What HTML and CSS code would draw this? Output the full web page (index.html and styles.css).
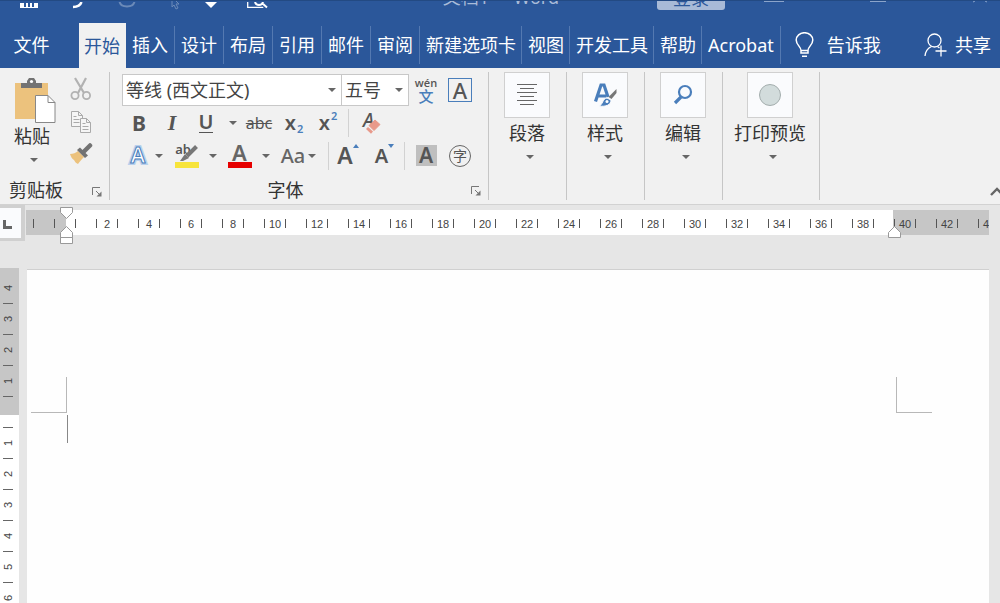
FILE: index.html
```html
<!DOCTYPE html>
<html lang="zh-CN">
<head>
<meta charset="utf-8">
<meta name="viewport" content="width=device-width, initial-scale=1">
<title>文档1 - Word</title>
<link rel="stylesheet" href="styles.css">
</head>
<body>
<svg class="defs" width="0" height="0" aria-hidden="true">
  <symbol id="caret" viewBox="0 0 8 4"><path d="M0 0h8L4 4z" fill="currentColor"/></symbol>
  <symbol id="launcher" viewBox="0 0 10 10"><path d="M.5 8V.5H8M4 4l4 4" fill="none" stroke="#777"/><path d="M9.500 4.500v5h-5z" fill="#777"/></symbol>
</svg>

<header class="titlebar">
  <div class="quick">
    <button class="q" aria-label="保存"><svg width="18" height="6" viewBox="0 0 18 6"><path d="M0 0h18v5H0z" fill="#fff"/><path d="M4 0h10v4H4z" fill="#2b579a"/><path d="M6 0h2v4H6zM10 0h2v4h-2z" fill="#fff"/></svg></button>
    <button class="q" aria-label="撤消"><svg width="12" height="7" viewBox="0 0 12 7"><path d="M9.500 0C8.500 3 5.500 4.800 1 5" fill="none" stroke="#fff" stroke-width="2.500"/></svg></button>
    <button class="q dim" aria-label="恢复"><svg width="18" height="7" viewBox="0 0 18 7"><path d="M1.500 0c2 6 13 6 15 0" fill="none" stroke="#fff" stroke-width="2"/></svg></button>
    <button class="q dim" aria-label="选择"><svg width="10" height="9" viewBox="0 0 10 9"><path d="M1 0v6l2-2 2 4 2-1-2-4h3L5 0" fill="none" stroke="#fff"/></svg></button>
    <button class="q q-more" aria-label="触摸模式"><svg width="14" height="7" viewBox="0 0 14 7"><path d="M1 0h12L7 6z" fill="#fff"/></svg></button>
    <button class="q q-preview" aria-label="打印预览"><svg width="22" height="8" viewBox="0 0 22 8"><path d="M.7 0v5.300h15.600" fill="none" stroke="#fff" stroke-width="1.300"/><path d="M8 0c1 4 7 4 8 0M15 1l5 4.500" fill="none" stroke="#fff" stroke-width="2"/></svg></button>
  </div>
  <span class="doc-title">文档1  -  Word</span>
  <button class="login">登录</button>
  <div class="window">
    <button class="w" aria-label="功能区选项"><svg width="20" height="3"><path d="M0 .5h20" stroke="#8ba4cb"/></svg></button>
    <button class="w" aria-label="还原"><svg width="16" height="3"><path d="M0 .5h16" stroke="#8ba4cb"/></svg></button>
    <button class="w" aria-label="关闭"><svg width="16" height="3"><path d="M1 1l2-1M13 0l2 1" stroke="#8ba4cb"/></svg></button>
  </div>
</header>

<nav class="tabs">
  <button class="file">文件</button>
  <button class="tab active">开始</button>
  <button class="tab">插入</button>
  <button class="tab">设计</button>
  <button class="tab">布局</button>
  <button class="tab">引用</button>
  <button class="tab">邮件</button>
  <button class="tab">审阅</button>
  <button class="tab snug">新建选项卡</button>
  <button class="tab snug">视图</button>
  <button class="tab snug">开发工具</button>
  <button class="tab snug">帮助</button>
  <button class="tab">Acrobat</button>
  <button class="aux tell"><svg width="19" height="26" viewBox="0 0 19 26" fill="none" stroke="#fff" stroke-width="1.500"><path d="M6 18.500c0-4-4.800-5.500-4.800-10.500a8.300 7.300 0 0 1 16.600 0c0 5-4.800 6.500-4.800 10.500zM6 18.500v2.500h7v-2.500M7 24.300h5"/></svg>告诉我</button>
  <button class="aux share"><svg width="23" height="24" viewBox="0 0 23 24" fill="none" stroke="#fff" stroke-width="1.300"><circle cx="10.500" cy="7.500" r="6.500"/><path d="M1 23c.5-5 3-8 6.500-9.500M13.500 13.500l2 1.500M17 12.500v11M11.500 18h11"/></svg>共享</button>
</nav>

<section class="ribbon">
  <div class="group clipboard">
    <div class="clip-tools">
      <button class="paste">
        <svg width="42" height="47" viewBox="0 0 42 47"><path d="M1 6h33v36H1z" fill="#ecc27d"/><path d="M7 11V6h6V4l2-3h5l2 3v2h6v5z" fill="#737373"/><circle cx="17.500" cy="4.500" r="1.600" fill="#fff"/><path d="M21.500 18.500H34l7 7v20H21.500z" fill="#fff" stroke="#888"/><path d="M34 18.500v7h7" fill="none" stroke="#888"/></svg>
        <span>粘贴</span>
        <svg class="caret"><use href="#caret"/></svg>
      </button>
      <div class="clip-side">
        <button aria-label="剪切"><svg width="22" height="24" viewBox="0 0 22 24" fill="none" stroke="#b2b2b2"><path d="M5 1l9 15M16 1L8 16" stroke-width="2.200"/><circle cx="5" cy="18.500" r="3.600" stroke-width="1.800"/><circle cx="16.500" cy="18.500" r="3.600" stroke-width="1.800"/></svg></button>
        <button aria-label="复制"><svg width="22" height="24" viewBox="0 0 22 24" fill="#f5f5f5" stroke="#aaa"><path d="M1.500 1.500h7l4 4v11h-11zM8.500 1.500v4h4"/><path d="M3.500 6.500h3M3.500 9.500h6M3.500 12.500h6"/><path d="M10.500 8.500h6l4 4v10h-10zM16.500 8.500v4h4M12.500 13.500h3M12.500 16.500h6M12.500 19.500h6"/></svg></button>
        <button aria-label="格式刷"><svg width="24" height="24" viewBox="0 0 24 24"><path d="M1 11c3 0 6-1 8-3l6 6c-2 2-4 4-6 7-2-1-3-2-4-4-2-1-3-3-4-6z" fill="#ecc27d"/><path d="M8 7l3-2.500 8 8-3 2.500z" fill="#737373"/><path d="M15 8.500l6-6" stroke="#737373" stroke-width="4.500" stroke-linecap="round"/></svg></button>
      </div>
    </div>
    <div class="group-label"><span>剪贴板</span><button class="launch" aria-label="剪贴板选项"><svg width="10" height="10"><use href="#launcher"/></svg></button></div>
  </div>

  <div class="group font">
    <div class="row row-select">
      <label class="combo combo-name"><select aria-label="字体"><option>等线 (西文正文)</option></select><svg class="caret"><use href="#caret"/></svg></label>
      <label class="combo combo-size"><select aria-label="字号"><option>五号</option></select><svg class="caret"><use href="#caret"/></svg></label>
      <button class="pinyin"><span>wén</span><b>文</b></button>
      <button class="boxed">A</button>
    </div>
    <div class="row row-style">
      <button class="bold">B</button>
      <button class="italic">I</button>
      <button class="underline">U</button>
      <button aria-label="下划线样式"><svg class="caret"><use href="#caret"/></svg></button>
      <button class="strike">abc</button>
      <button class="script">x<sub>2</sub></button>
      <button class="script">x<sup>2</sup></button>
      <i class="sep"></i>
      <button class="clear"><span>A</span><svg width="16" height="16" viewBox="0 0 16 16"><path d="M10 1l5 4.500-6 6-5-5z" fill="#e8998a" stroke="#e8998a" stroke-linejoin="round"/><path d="M3 8l5 4.500-2 2.300L1 10z" fill="#e8998a"/></svg></button>
    </div>
    <div class="row row-color">
      <button aria-label="文本效果"><svg class="fx" width="20" height="22" viewBox="0 0 20 22"><text class="fx-glow" x="10" y="18" text-anchor="middle" aria-hidden="true">A</text><text class="fx-line" x="10" y="18" text-anchor="middle">A</text></svg></button>
      <button aria-label="文本效果选项"><svg class="caret"><use href="#caret"/></svg></button>
      <button class="mark"><span>ab</span><svg width="18" height="17" viewBox="0 0 18 17"><path d="M16.500 1.500L7 11" stroke="#777" stroke-width="4"/><path d="M5 9l4 4-6 3H0z" fill="#777"/></svg></button>
      <button aria-label="突出显示颜色"><svg class="caret"><use href="#caret"/></svg></button>
      <button class="ink">A</button>
      <button aria-label="字体颜色"><svg class="caret"><use href="#caret"/></svg></button>
      <button class="case">Aa<svg class="caret"><use href="#caret"/></svg></button>
      <i class="sep"></i>
      <button class="grow">A<svg width="6" height="4" viewBox="0 0 6 4"><path d="M0 4h6L3 0z" fill="#4a7ebb"/></svg></button>
      <button class="grow shrink">A<svg width="6" height="4" viewBox="0 0 6 4"><path d="M0 0h6L3 4z" fill="#4a7ebb"/></svg></button>
      <i class="sep"></i>
      <button class="shade"><span>A</span></button>
      <button class="circled"><span>字</span></button>
    </div>
    <div class="group-label centered"><span>字体</span><button class="launch" aria-label="字体选项"><svg width="10" height="10"><use href="#launcher"/></svg></button></div>
  </div>

  <button class="group big">
    <span class="tile"><svg width="20" height="22" viewBox="0 0 20 22" stroke="#666"><path d="M0 .5h20M3 4.500h14M0 8.500h20M3 12.500h14M0 16.500h20M3 20.500h14"/></svg></span>
    <span>段落</span><svg class="caret"><use href="#caret"/></svg>
  </button>
  <button class="group big">
    <span class="tile"><svg width="24" height="24" viewBox="0 0 24 24"><path d="M2.500 18.500L8 2h3l4 12M5 13h8" fill="none" stroke="#4a7ebb" stroke-width="3.200"/><path d="M23.500 6v4l-5 6-3-2z" fill="#777"/><path d="M14 15l4 2c0 5-5 7-12 6 4-1 3-7 8-8z" fill="#4a7ebb" stroke="#fafbfd"/><circle cx="14" cy="18.500" r="1.500" fill="#fff"/></svg></span>
    <span>样式</span><svg class="caret"><use href="#caret"/></svg>
  </button>
  <button class="group big">
    <span class="tile"><svg width="20" height="22" viewBox="0 0 20 22" fill="none" stroke="#4a7ebb"><circle cx="12" cy="8" r="6" stroke-width="2.200"/><path d="M8 13l-6 6" stroke-width="3.200"/></svg></span>
    <span>编辑</span><svg class="caret"><use href="#caret"/></svg>
  </button>
  <button class="group big big-wide">
    <span class="tile"><svg width="24" height="24" viewBox="0 0 24 24"><circle cx="12" cy="12" r="10.500" fill="#d2dcdc" stroke="#a3adad"/></svg></span>
    <span>打印预览</span><svg class="caret"><use href="#caret"/></svg>
  </button>
  <button class="collapse" aria-label="折叠功能区"><svg width="14" height="9" viewBox="0 0 14 9"><path d="M1 8l6-6 6 6" fill="none" stroke="#666" stroke-width="2.400"/></svg></button>
</section>

<div class="ruler-row">
  <button class="tabstop" aria-label="制表符"><svg width="9" height="9" viewBox="0 0 9 9"><path d="M1.500 0v7.500H9" fill="none" stroke="#666" stroke-width="3"/></svg></button>
  <div class="hruler">
    <div class="scale">
      <div class="ticks"><span>2</span><span></span><span>2</span><span>4</span><span>6</span><span>8</span><span>10</span><span>12</span><span>14</span><span>16</span><span>18</span><span>20</span><span>22</span><span>24</span><span>26</span><span>28</span><span>30</span><span>32</span><span>34</span><span>36</span><span>38</span><span>40</span><span>42</span><span>44</span></div>
    </div>
    <svg class="indent indent-left" width="14" height="38" viewBox="0 0 14 38" fill="#fff" stroke="#999"><path d="M.5.500h12v5l-6 6-6-6zM.5 30.500v-5l6-6 6 6v5zM.5 30.500h12v6H.5z"/></svg>
    <svg class="indent indent-right" width="14" height="13" viewBox="0 0 14 13" fill="#fff" stroke="#999"><path d="M.5 11.500v-5l6-6 6 6v5z"/></svg>
  </div>
</div>

<main class="work">
  <div class="vruler"><span>4</span><span>3</span><span>2</span><span>1</span><span></span><span>1</span><span>2</span><span>3</span><span>4</span><span>5</span><span>6</span></div>
  <div class="page">
    <div><div class="corner corner-left"></div><div class="cursor"></div></div>
    <div class="corner corner-right"></div>
  </div>
</main>
</body>
</html>
```

FILE: styles.css
```css
* { box-sizing: border-box; }

body {
  margin: 0;
  height: 100vh;
  display: flex;
  flex-direction: column;
  overflow: hidden;
  background: #e6e6e6;
  color: #333;
  font: 18px/24px "Noto Sans", "Noto Sans CJK SC", sans-serif;
}

button {
  display: flex;
  align-items: center;
  justify-content: center;
  padding: 0;
  border: 0;
  background: none;
  color: inherit;
  font: inherit;
  white-space: nowrap;
}

svg { display: block; flex: none; }
.defs { position: absolute; }
.caret { width: 8px; height: 4px; color: #666; }

/* Title bar */
.titlebar {
  display: flex;
  align-items: flex-start;
  flex: none;
  height: 23px;
  overflow: hidden;
  background: #2b579a;
  border-top: 1px solid #234a83;
}
.quick { display: flex; flex: 1; padding-left: 4px; }
.q { width: 49px; }
.q-more { width: 22px; }
.q-preview { width: 72px; }
.dim { opacity: .3; }
.doc-title { margin-top: -16px; color: #a9bbd8; white-space: pre; }
.login {
  width: 68px;
  height: 24px;
  margin: -15px 0 0 98px;
  border-radius: 3px;
  background: #a8bad7;
  color: #2b579a;
}
.window { display: flex; justify-content: space-between; width: 275px; padding: 0 12px 0 39px; }

/* Tabs */
.tabs { display: flex; align-items: stretch; flex: none; height: 45px; background: #2b579a; color: #fff; }
.tabs button { padding-bottom: 2px; }
.file { width: 79px; padding-right: 16px; }
.tab {
  padding: 0 7px 0 6px;
  background: linear-gradient(#5479b1, #5479b1) right 3px / 1px 38px no-repeat;
}
.tab.snug { padding-right: 6px; }
.tab.active { padding: 0 6px 0 5px; background: #f1f1f1; color: #2b579a; }
.aux { gap: 13px; }
.tell { margin-left: 14px; }
.share { gap: 8px; margin-left: auto; padding-right: 9px; }

/* Ribbon */
.ribbon {
  display: flex;
  flex: none;
  height: 137px;
  padding: 4px 0;
  background: #f1f1f1;
  border-bottom: 1px solid #d2d2d2;
  overflow: hidden;
}
.group { display: flex; flex-direction: column; border-right: 1px solid #c6c6c6; }
.clipboard { width: 110px; padding: 5px 7px 0 9px; }
.clip-tools { display: flex; flex: 1; gap: 10px; }
.paste { flex-direction: column; justify-content: flex-start; width: 50px; }
.paste svg:first-child { margin-left: 2px; }
.paste span { margin: 0 4px 10px 0; }
.clip-side { display: flex; flex-direction: column; gap: 9px; width: 24px; }
.group-label { display: flex; align-items: center; justify-content: space-between; height: 24px; margin-bottom: -2px; }
.launch { margin-top: 4px; }

.font { width: 379px; padding: 2px 7px 0 12px; }
.row { display: grid; align-items: center; height: 33px; color: #555; justify-content: start; }
.row > * { justify-self: center; }
.row-select { height: 32px; grid-template-columns: 220px 67px 34px 34px; }
.combo { position: relative; width: 100%; height: 32px; border: 1px solid #c8c8c8; background: #fff; }
.combo-size { border-left: 0; }
.combo select {
  width: 100%;
  height: 100%;
  padding: 0 3px;
  border: 0;
  appearance: none;
  background: none;
  color: #444;
  font: inherit;
}
.combo .caret { position: absolute; right: 5px; top: 13px; }
.pinyin { flex-direction: column; font: 600 11px/11px "Open Sans", "Noto Sans", sans-serif; }
.pinyin b { color: #4a7ebb; font: 500 15px/16px "Noto Sans CJK SC", sans-serif; }
.boxed { width: 24px; height: 24px; border: 1px solid #4a7ebb; font-size: 22px; font-weight: 500; }

.row-style { grid-template-columns: 34px 32px 36px 18px 34px 36px 32px 8px 40px; }
.bold { font-size: 21px; font-weight: 700; }
.italic { font: italic 700 22px "Liberation Serif", serif; }
.underline { font-weight: 600; font-size: 20px; line-height: 20px; border-bottom: 1px solid #555; }
.strike { font-size: 16px; text-decoration: line-through; }
.script { font-weight: 600; font-size: 20px; }
.script sub, .script sup { color: #4a7ebb; font-size: 11px; line-height: 12px; vertical-align: baseline; margin-left: 1px; }
.script sub { margin-top: 13px; }
.script sup { margin-top: -13px; }
.sep { width: 1px; height: 28px; background: #d2d2d2; }
.clear { align-items: flex-start; font: italic 500 19px/19px "Noto Sans", sans-serif; }
.clear svg { margin: 8px 0 0 -9px; }

.row-color { grid-template-columns: 32px 10px 45px 8px 45px 8px 57px 2px 38px 35px 5px 38px 30px; }
.fx { overflow: visible; }
.fx-glow, .fx-line { font: 600 22px "Noto Sans", sans-serif; }
.fx-glow { fill: none; stroke: #b9d0ec; stroke-width: 4; }
.fx-line { fill: #fff; stroke: #4a7ebb; stroke-width: 1; }
.mark { align-items: flex-start; width: 24px; height: 25px; border-bottom: 6px solid #f7e43b; font: 600 13px/13px "Noto Sans", sans-serif; }
.mark svg { margin: 2px 0 0 -11px; }
.ink { width: 24px; height: 25px; border-bottom: 6px solid #e60000; font: 600 22px/19px "Noto Sans", sans-serif; color: #666; }
.case { gap: 3px; font-size: 20px; font-weight: 500; color: #666; }
.grow { align-items: flex-start; font: 600 23px/23px "Noto Sans", sans-serif; }
.shrink { font-size: 20px; }
.shade span { display: block; width: 21px; background: #bfbfbf; font: 600 21px/21px "Noto Sans", sans-serif; }
.circled span { width: 22px; border: 1px solid #666; border-radius: 50%; font-size: 14px; line-height: 20px; }
.centered { position: relative; justify-content: center; margin: auto 0 -2px; }
.centered span { padding-right: 32px; }
.centered .launch { position: absolute; right: 0; top: 4px; }

.big { justify-content: flex-start; padding: 0 16px 0 15px; }
.big-wide { padding: 0 13px 0 11px; }
.tile {
  display: flex;
  align-items: center;
  justify-content: center;
  width: 46px;
  height: 46px;
  margin-bottom: 3px;
  border: 1px solid #d0d0d0;
  background: #fafbfd;
}
.big .caret { margin: 10px 0 0 6px; }
.collapse { align-self: flex-end; margin: 0 -4px 4px auto; }

/* Horizontal ruler */
.ruler-row { display: flex; align-items: flex-start; flex: none; height: 63px; }
.tabstop {
  flex: none;
  width: 25px;
  height: 36px;
  padding: 3px 6px 0 0;
  border: solid #d0d0d0;
  border-width: 3px 4px 3px 0;
  background: #fafbfd;
}
.hruler { position: relative; flex: 1; min-width: 0; margin: 5px 11px 0 1px; }
.scale {
  height: 25px;
  overflow: hidden;
  background: linear-gradient(to right, #c6c6c6 40px, #fff 40px, #fff 867px, #c6c6c6 867px);
}
.ticks { display: flex; align-items: center; height: 26px; margin-left: -24px; }
.ticks span {
  flex: none;
  width: 22px;
  height: 9px;
  margin: 0 10px;
  border: solid #555;
  border-width: 0 1px;
  color: #444;
  font: 11px/10px "Liberation Sans", sans-serif;
  text-align: center;
}
.indent { position: absolute; }
.indent-left { left: 34px; top: -3px; }
.indent-right { left: 862px; top: 16px; }

/* Document */
.work { display: flex; flex: 1; min-height: 0; overflow: hidden; padding-right: 11px; }
.vruler {
  flex: none;
  width: 19px;
  padding-top: 5px;
  background: linear-gradient(#c6c6c6 147px, #fff 147px);
}
.vruler span {
  display: block;
  width: 10px;
  height: 31px;
  margin-left: 3px;
  border-top: 1px solid #666;
  color: #444;
  font: 11px/10px "Liberation Sans", sans-serif;
  text-align: center;
  writing-mode: vertical-rl;
  transform: rotate(180deg);
}
.page {
  display: flex;
  align-items: flex-start;
  justify-content: space-between;
  flex: 1;
  margin: 1px 0 0 8px;
  padding: 107px 57px 0 4px;
  background: #fefefe;
  border-top: 1px solid #d0d0d0;
}
.corner { width: 36px; height: 36px; border-bottom: 1px solid #b8b8b8; }
.corner-left { border-right: 1px solid #b8b8b8; }
.corner-right { border-left: 1px solid #b8b8b8; }
.cursor { width: 1px; height: 28px; margin: 2px 0 0 36px; background: #888; }
```
